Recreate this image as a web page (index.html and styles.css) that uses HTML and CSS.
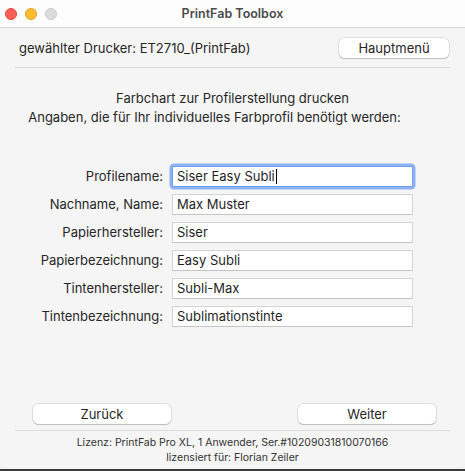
FILE: index.html
```html
<!DOCTYPE html>
<html lang="de">
<head>
  <meta charset="UTF-8">
  <meta name="viewport" content="width=device-width, initial-scale=1.0">
  <title>PrintFab Toolbox</title>
  <link rel="stylesheet" href="styles.css">
</head>
<body>
  <div class="window">
    <div class="titlebar">
      <div class="lights">
        <span class="light red"></span>
        <span class="light yellow"></span>
        <span class="light gray"></span>
      </div>
      <div class="title">PrintFab Toolbox</div>
    </div>

    <div class="content">
      <div class="printer-row">
        <div class="printer">gewählter Drucker: ET2710_(PrintFab)</div>
        <button class="btn menu-btn">Hauptmenü</button>
      </div>
      <div class="separator"></div>

      <div class="intro">
        <p class="intro-title">Farbchart zur Profilerstellung drucken</p>
        <p class="intro-text">Angaben, die für Ihr individuelles Farbprofil benötigt werden:</p>
      </div>

      <!-- Profile form -->
      <div class="form">
        <label>Profilename:</label>
        <div class="field focused">Siser Easy Subli<span class="caret"></span></div>
        <label>Nachname, Name:</label>
        <div class="field">Max Muster</div>
        <label>Papierhersteller:</label>
        <div class="field">Siser</div>
        <label>Papierbezeichnung:</label>
        <div class="field">Easy Subli</div>
        <label>Tintenhersteller:</label>
        <div class="field">Subli-Max</div>
        <label>Tintenbezeichnung:</label>
        <div class="field">Sublimationstinte</div>
      </div>

      <div class="spacer"></div>

      <div class="nav-row">
        <button class="btn nav-btn">Zurück</button>
        <button class="btn nav-btn">Weiter</button>
      </div>
      <div class="separator"></div>

      <div class="license">
        <p>Lizenz: PrintFab Pro XL, 1 Anwender, Ser.#10209031810070166</p>
        <p>lizensiert für: Florian Zeiler</p>
      </div>
    </div>
  </div>
  <div class="desktop"></div>
</body>
</html>
```

FILE: styles.css
```css
* {
  margin: 0;
  padding: 0;
  box-sizing: border-box;
}

body {
  font-family: 'Inter', 'Liberation Sans', sans-serif;
  font-size: 13px;
  color: #262626;
  background-color: #f3f3f3;
  width: 465px;
  height: 471px;
  overflow: hidden;
}

.window {
  width: 465px;
  height: 469px;
  background-color: #f5f5f5;
  border-radius: 0 0 10px 10px;
  display: flex;
  flex-direction: column;
  overflow: hidden;
}

.titlebar {
  height: 28px;
  background-color: #fdfdfd;
  border-bottom: 1px solid #d6d6d6;
  display: flex;
  align-items: center;
  position: relative;
}

.lights {
  display: flex;
  gap: 8px;
  padding-left: 5px;
}

.light {
  width: 12px;
  height: 12px;
  border-radius: 50%;
}

.light.red {
  background-color: #ff5f57;
  border: 1px solid #e2463f;
}

.light.yellow {
  background-color: #febc2e;
  border: 1px solid #e1a116;
}

.light.gray {
  background-color: #dcdcdc;
  border: 1px solid #cacaca;
}

.title {
  position: absolute;
  left: 0;
  right: 0;
  text-align: center;
  font-weight: 600;
  font-size: 12.5px;
  color: #4b4b4b;
  pointer-events: none;
}

.content {
  flex: 1;
  display: flex;
  flex-direction: column;
}

.printer-row {
  display: flex;
  justify-content: space-between;
  align-items: center;
  padding: 10px 16px 0 19px;
}

.btn {
  font-family: inherit;
  font-size: 13px;
  color: #262626;
  background-color: #ffffff;
  border: none;
  border-radius: 5px;
  box-shadow: 0 0 0 0.5px rgba(0, 0, 0, 0.18), 0 1px 1px rgba(0, 0, 0, 0.15);
  height: 20px;
}

.menu-btn {
  width: 110px;
}

.separator {
  height: 1px;
  background-color: #dcdcdc;
  margin: 0 15px;
}

.printer-row + .separator {
  margin-top: 9px;
}

.intro {
  padding-top: 21px;
  line-height: 19px;
}

.intro-title {
  text-align: center;
}

.intro-text {
  text-align: center;
  padding-right: 36px;
}

.form {
  display: grid;
  grid-template-columns: 163px 241px;
  column-gap: 9px;
  row-gap: 7px;
  margin-top: 39px;
}

.form label {
  text-align: right;
  line-height: 21px;
}

.field {
  height: 21px;
  background-color: #ffffff;
  border: 1px solid #d5d5d5;
  border-bottom-color: #c4c4c4;
  padding: 0 4px;
  line-height: 19px;
  color: #1f1f1f;
}

.field.focused {
  border-color: #6f9de9;
  box-shadow: 0 0 0 2.5px #8db2f1;
  border-radius: 2px;
}

.caret {
  display: inline-block;
  width: 1px;
  height: 15px;
  margin-left: 1px;
  background-color: #000000;
  vertical-align: -3px;
}

.spacer {
  flex: 1;
}

.nav-row {
  display: flex;
  justify-content: space-between;
  padding: 0 29px 6px 33px;
}

.nav-btn {
  width: 138px;
}

.license {
  font-size: 10.5px;
  text-align: center;
  color: #333333;
  line-height: 15px;
  padding: 4px 0 4px;
}

.desktop {
  height: 2px;
  background-color: #3a3a3a;
}
```
